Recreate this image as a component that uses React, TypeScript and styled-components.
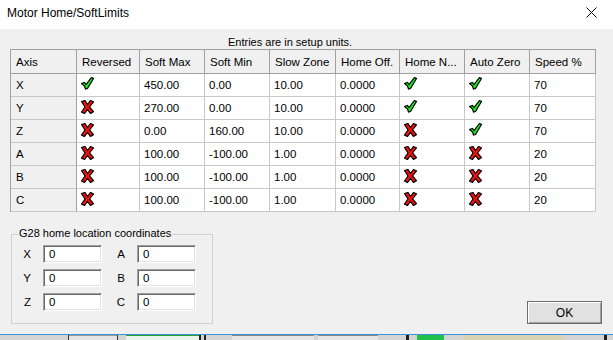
import React from "react";
import styled, { createGlobalStyle } from "styled-components";

const GlobalStyle = createGlobalStyle`
  html, body { margin: 0; padding: 0; background: #f0f0f0; }
  body { font-family: "Liberation Sans", Arial, sans-serif; font-size: 11px; color: #000; }
  #root { width: 613px; height: 340px; overflow: hidden; }
`;

const Window = styled.div`
  width: 613px;
  height: 340px;
  display: flex;
  flex-direction: column;
  background: #f0f0f0;
`;

const TitleBar = styled.div`
  flex: none;
  height: 29px;
  box-sizing: border-box;
  background: #fff;
  display: flex;
  align-items: center;
  justify-content: space-between;
  padding: 0 16px 4px 7px;
  font-size: 12px;
`;

const Body = styled.div`
  flex: 1;
  display: flex;
  flex-direction: column;
  padding-bottom: 10px;
  box-sizing: border-box;
`;

const Caption = styled.div`
  height: 20px;
  display: flex;
  align-items: flex-end;
  padding-left: 228px;
  line-height: 13px;
`;

const Grid = styled.div`
  margin-left: 10px;
  width: 586px;
  box-sizing: border-box;
  display: grid;
  grid-template-columns: 66px 63px 65px 65px 66px 64px 65px 65px 66px;
  grid-auto-rows: 23px;
  grid-template-rows: 24px;
  border-top: 1px solid #a0a0a0;
  border-left: 1px solid #a0a0a0;
  background: #fff;
  font-size: 11.5px;
`;

const Cell = styled.div<{ $kind: "head" | "axis" | "data"; $icon?: boolean }>`
  box-sizing: border-box;
  display: flex;
  align-items: ${(p) => (p.$icon ? "flex-start" : "center")};
  padding: ${(p) => (p.$icon ? "3px 0 0 4px" : p.$kind === "axis" || p.$kind === "head" ? "0 0 0 5px" : "0 0 0 4px")};
  white-space: nowrap;
  overflow: hidden;
  background: ${(p) => (p.$kind === "data" ? "#fff" : "#f0f0f0")};
  border-right: 1px solid ${(p) => (p.$kind === "data" ? "#c8c8c8" : "#a0a0a0")};
  border-bottom: 1px solid ${(p) => (p.$kind === "head" ? "#a0a0a0" : "#c8c8c8")};
`;

const Bottom = styled.div`
  margin-top: 22px;
  display: flex;
  align-items: flex-end;
  justify-content: space-between;
  padding: 0 11px;
`;

const GroupBox = styled.div`
  position: relative;
  width: 202px;
  height: 90px;
  box-sizing: border-box;
  border: 1px solid #d0d0d0;
  padding-top: 10px;
`;

const GroupTitle = styled.span`
  position: absolute;
  top: -8px;
  left: 6px;
  padding: 0 1px;
  line-height: 13px;
  background: #f0f0f0;
`;

const Fields = styled.div`
  display: grid;
  grid-template-columns: 31px 59px 35px 59px;
  grid-auto-rows: 18px;
  row-gap: 6px;
  font-size: 11.5px;
`;

const FieldLabel = styled.label`
  display: flex;
  align-items: center;
  justify-content: flex-end;
  padding-right: 12px;
`;

const FieldInput = styled.input`
  width: 59px;
  height: 18px;
  box-sizing: border-box;
  margin: 0;
  padding: 0 0 0 5px;
  font: inherit;
  color: #000;
  background: #fff;
  border-style: solid;
  border-width: 1px;
  border-color: #a0a0a0 #fff #fff #a0a0a0;
  box-shadow: inset 1px 1px 0 #696969, inset -1px -1px 0 #e3e3e3;
  outline: none;
`;

const OkButton = styled.button`
  width: 75px;
  height: 23px;
  box-sizing: border-box;
  margin: 0;
  padding: 0;
  font-family: inherit;
  font-size: 12px;
  color: #000;
  background: #e1e1e1;
  border: 1px solid #6e6e6e;
  box-shadow: inset 1px 1px 0 #fff, inset -1px -1px 0 #a0a0a0;
`;

const Strip = styled.div`
  flex: none;
  height: 6px;
  box-sizing: border-box;
  border-top: 1px solid #3b8fd6;
  display: flex;
  background: #d4d4d4;
`;

const Seg = styled.div<{ $w: number; $bg: string; $top?: string }>`
  flex: none;
  width: ${(p) => p.$w}px;
  background: ${(p) => p.$bg};
  ${(p) => (p.$top ? `border-top: 1px solid ${p.$top};` : "")}
  box-sizing: border-box;
`;

const CloseIcon = () => (
  <svg width="11" height="11" viewBox="0 0 11 11">
    <path d="M0.5 0.5 L10.5 10.5 M10.5 0.5 L0.5 10.5" stroke="#000" strokeWidth="1" fill="none" />
  </svg>
);

const Check = () => (
  <svg width="13" height="13" viewBox="0 0 13 13">
    <path
      d="M0.5 6.5 L3.5 5.5 L5 7.5 L10.5 0.5 L12.5 1.5 L6.5 11.5 L4.5 12 L3.5 9 Z"
      fill="#1ee61e"
      stroke="#000"
      strokeWidth="1.2"
      strokeLinejoin="miter"
    />
  </svg>
);

const Cross = () => (
  <svg width="13" height="14" viewBox="0 0 13 14">
    <path
      d="M0.5 1.5 L4 0.5 L6.5 4.5 L9.5 0.5 L12.5 2 L8.5 7 L12.5 11.5 L9.5 13.5 L6.5 9.5 L3.5 13.5 L0.5 12 L4 7 Z"
      fill="#f01010"
      stroke="#000"
      strokeWidth="1.2"
      strokeLinejoin="miter"
    />
  </svg>
);

type Row = {
  axis: string;
  rev: boolean;
  max: string;
  min: string;
  slow: string;
  off: string;
  homeN: boolean;
  auto: boolean;
  speed: string;
};

const rows: Row[] = [
  { axis: "X", rev: true, max: "450.00", min: "0.00", slow: "10.00", off: "0.0000", homeN: true, auto: true, speed: "70" },
  { axis: "Y", rev: false, max: "270.00", min: "0.00", slow: "10.00", off: "0.0000", homeN: true, auto: true, speed: "70" },
  { axis: "Z", rev: false, max: "0.00", min: "160.00", slow: "10.00", off: "0.0000", homeN: false, auto: true, speed: "70" },
  { axis: "A", rev: false, max: "100.00", min: "-100.00", slow: "1.00", off: "0.0000", homeN: false, auto: false, speed: "20" },
  { axis: "B", rev: false, max: "100.00", min: "-100.00", slow: "1.00", off: "0.0000", homeN: false, auto: false, speed: "20" },
  { axis: "C", rev: false, max: "100.00", min: "-100.00", slow: "1.00", off: "0.0000", homeN: false, auto: false, speed: "20" },
];

const headers = ["Axis", "Reversed", "Soft Max", "Soft Min", "Slow Zone", "Home Off.", "Home N...", "Auto Zero", "Speed %"];

const coords: [string, string][] = [
  ["X", "A"],
  ["Y", "B"],
  ["Z", "C"],
];

const stripSegs: { w: number; bg: string; top?: string }[] = [
  { w: 68, bg: "#d4d4d4" },
  { w: 1, bg: "#333" },
  { w: 48, bg: "#e4e4e4", top: "#9a9a9a" },
  { w: 1, bg: "#333" },
  { w: 8, bg: "#d4d4d4" },
  { w: 73, bg: "#eaf5ea", top: "#2ea02e" },
  { w: 2, bg: "#222" },
  { w: 3, bg: "#d4d4d4" },
  { w: 2, bg: "#222" },
  { w: 26, bg: "#d4d4d4" },
  { w: 82, bg: "#e6e6e6", top: "#8a8a8a" },
  { w: 4, bg: "#d4d4d4" },
  { w: 60, bg: "#e6e6e6", top: "#8a8a8a" },
  { w: 28, bg: "#d4d4d4" },
  { w: 3, bg: "#1e1e1e" },
  { w: 8, bg: "#d4d4d4" },
  { w: 27, bg: "#1fc14a" },
  { w: 19, bg: "#d4d4d4" },
  { w: 100, bg: "#d9d5b4" },
  { w: 41, bg: "#d4d4d4" },
  { w: 3, bg: "#1e1e1e" },
  { w: 7, bg: "#d4d4d4" },
];

export default function App() {
  return (
    <>
      <GlobalStyle />
      <Window>
        <TitleBar>
          <span>Motor Home/SoftLimits</span>
          <CloseIcon />
        </TitleBar>
        <Body>
          <Caption>Entries are in setup units.</Caption>
          <Grid>
            {headers.map((h) => (
              <Cell key={h} $kind="head">
                {h}
              </Cell>
            ))}
            {rows.map((r) => (
              <React.Fragment key={r.axis}>
                <Cell $kind="axis">{r.axis}</Cell>
                <Cell $kind="data" $icon>
                  {r.rev ? <Check /> : <Cross />}
                </Cell>
                <Cell $kind="data">{r.max}</Cell>
                <Cell $kind="data">{r.min}</Cell>
                <Cell $kind="data">{r.slow}</Cell>
                <Cell $kind="data">{r.off}</Cell>
                <Cell $kind="data" $icon>
                  {r.homeN ? <Check /> : <Cross />}
                </Cell>
                <Cell $kind="data" $icon>
                  {r.auto ? <Check /> : <Cross />}
                </Cell>
                <Cell $kind="data">{r.speed}</Cell>
              </React.Fragment>
            ))}
          </Grid>
          <Bottom>
            <GroupBox>
              <GroupTitle>G28 home location coordinates</GroupTitle>
              <Fields>
                {coords.map(([a, b]) => (
                  <React.Fragment key={a}>
                    <FieldLabel>{a}</FieldLabel>
                    <FieldInput readOnly defaultValue="0" />
                    <FieldLabel>{b}</FieldLabel>
                    <FieldInput readOnly defaultValue="0" />
                  </React.Fragment>
                ))}
              </Fields>
            </GroupBox>
            <OkButton>OK</OkButton>
          </Bottom>
        </Body>
        <Strip>
          {stripSegs.map((s, i) => (
            <Seg key={i} $w={s.w} $bg={s.bg} $top={s.top} />
          ))}
        </Strip>
      </Window>
    </>
  );
}
